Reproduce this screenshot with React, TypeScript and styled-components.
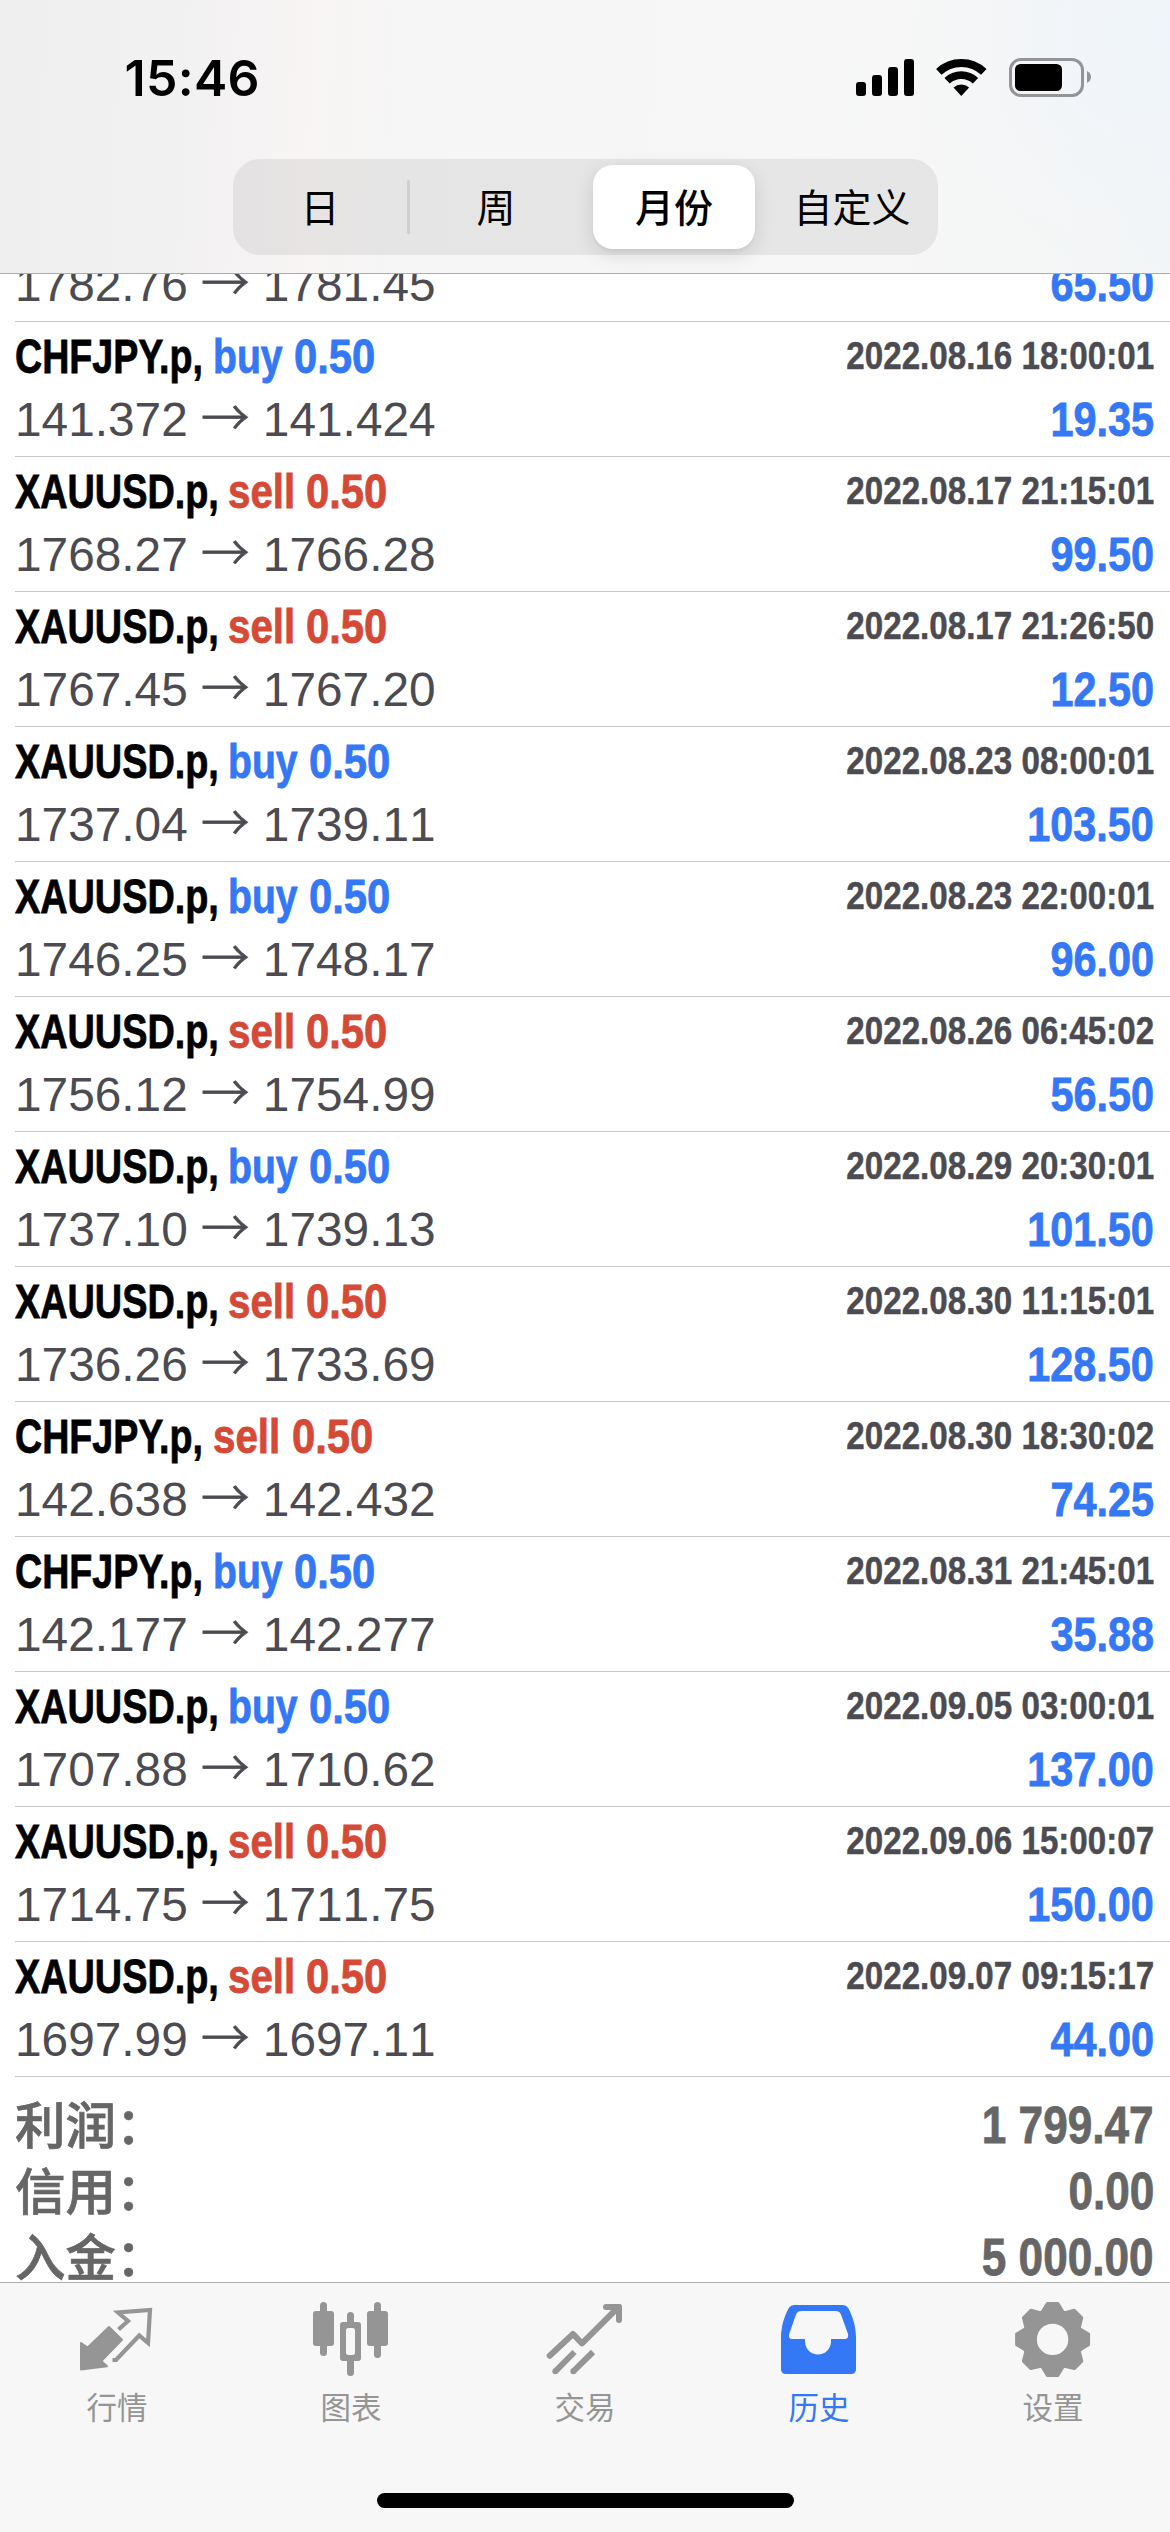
import React from 'react';
import styled, { createGlobalStyle } from 'styled-components';

const LATIN = '"Liberation Sans", Arial, sans-serif';
const HAN = '"Noto Sans CJK SC", "Liberation Sans", sans-serif';
const BLUE = '#3478f6';
const RED = '#d54a37';
const INK = '#4c4b51';
const TAB_GREY = '#959595';

const GlobalStyle = createGlobalStyle`
  * { box-sizing: border-box; }
  html, body { margin: 0; padding: 0; background: #fff; }
`;

const Screen = styled.div`
  display: flex;
  flex-direction: column;
  width: 1170px;
  height: 2532px;
  overflow: hidden;
  background: #fff;
  font-family: ${LATIN};
`;

/* ---------- header ---------- */

const Header = styled.header`
  flex: none;
  display: flex;
  flex-direction: column;
  align-items: center;
  height: 274px;
  border-bottom: 1px solid #adadae;
  background:
    radial-gradient(ellipse 260px 260px at 100% 12%, #f0f5fb 0%, rgba(241, 245, 250, 0) 100%),
    linear-gradient(92deg, #efefef 0%, #f1f1f1 14%, #f4f2f3 20%, #f8f5f4 27%, #f6f6f6 36%, #f7f7f7 70%, #f5f6f6 90%, #f3f5f7 100%);
`;

const StatusBar = styled.div`
  display: flex;
  align-items: flex-start;
  justify-content: space-between;
  width: 100%;
  height: 159px;
  padding: 48px 75px 0 124.5px;
`;

const Clock = styled.time`
  font: 600 50px/60px Inter, sans-serif;
  letter-spacing: 0.3px;
  color: #000;
`;

const StatusIcons = styled.svg`
  display: block;
  width: 245px;
  height: 46px;
  margin-top: 6px;
`;

const Segmented = styled.nav`
  display: flex;
  align-items: stretch;
  width: 705px;
  height: 96px;
  padding: 6px;
  border-radius: 27px;
  background: rgba(118, 118, 119, 0.13);
`;

const Segment = styled.button<{ $active?: boolean; $width: number; $before?: number; $after?: number }>`
  flex: none;
  width: ${p => p.$width}px;
  margin: 0 ${p => p.$after || 0}px 0 ${p => p.$before || 0}px;
  padding: 0 0 4px;
  border: 0;
  border-radius: 20px;
  background: ${p => (p.$active ? '#fff' : 'transparent')};
  box-shadow: ${p => (p.$active ? '0 6px 20px rgba(0,0,0,0.12), 0 3px 3px rgba(0,0,0,0.03)' : 'none')};
  color: #000;
  font: ${p => (p.$active ? 500 : 400)} 39px/56px ${HAN};
  white-space: nowrap;
`;

const SegmentDivider = styled.span`
  flex: none;
  width: 3px;
  height: 54px;
  margin: 15px 0;
  border-radius: 2px;
  background: #cfcfd0;
`;

/* ---------- deals ---------- */

const Deals = styled.main`
  flex: none;
  height: 2008px;
  padding-left: 15px;
  overflow: hidden;
`;

const Deal = styled.article<{ $clipped?: boolean }>`
  display: flex;
  flex-direction: column;
  gap: 9px;
  height: 135px;
  margin-top: ${p => (p.$clipped ? -87 : 0)}px;
  padding: 8px 16px 9px 0;
  border-bottom: 1px solid #c6c6c8;
`;

const Line = styled.div`
  display: flex;
  justify-content: space-between;
  height: 54px;
`;

const Caption = styled.div`
  display: flex;
`;

const Condensed = styled.span<{ $scale: number; $color: string; $width?: number; $right?: boolean }>`
  display: block;
  width: ${p => (p.$width ? `${p.$width}px` : 'auto')};
  font: 700 48px/54px ${LATIN};
  color: ${p => p.$color};
  -webkit-text-stroke: 0.8px ${p => p.$color};
  white-space: pre;
  transform: scaleX(${p => p.$scale});
  transform-origin: ${p => (p.$right ? 'right' : 'left')} center;
`;

const Stamp = styled(Condensed)`
  font-size: 39px;
  font-kerning: none;
  line-height: 52px;
  height: 52px;
  -webkit-text-stroke-width: 0.5px;
`;

const Prices = styled.span`
  font: 400 47.8px/54px ${LATIN};
  font-kerning: none;
  color: ${INK};
  white-space: pre;
`;

const Arrow = styled.span`
  font: 300 48.5px/0 ${HAN};
  -webkit-text-stroke: 0.8px ${INK};
`;

/* ---------- totals ---------- */

const Totals = styled.section`
  padding: 15px 16px 0 0;
`;

const TotalRow = styled.div`
  display: flex;
  justify-content: space-between;
  height: 66px;
`;

const TotalLabel = styled.span`
  font: 500 50.5px/60px ${HAN};
  color: #666;
  -webkit-text-stroke: 0.7px #666;
`;

const TotalValue = styled(Condensed)`
  font-size: 51px;
  line-height: 68px;
`;

/* ---------- tab bar ---------- */

const TabBar = styled.footer`
  flex: none;
  display: flex;
  flex-direction: column;
  justify-content: space-between;
  align-items: center;
  height: 250px;
  padding-bottom: 24px;
  border-top: 1px solid #adadae;
  background: #f7f7f7;
`;

const Tabs = styled.nav`
  display: grid;
  grid-template-columns: repeat(5, 1fr);
  width: 100%;
  padding-top: 15px;
`;

const Tab = styled.a<{ $active?: boolean }>`
  display: flex;
  flex-direction: column;
  align-items: center;
  gap: 9px;
  color: ${p => (p.$active ? BLUE : TAB_GREY)};
  font: 400 30.5px/39px ${HAN};
`;

const TabIcon = styled.svg`
  display: block;
  width: 110px;
  height: 80px;
`;

const HomeIndicator = styled.div`
  width: 417px;
  height: 15px;
  border-radius: 8px;
  background: #000;
`;

/* ---------- data ---------- */

type Side = 'buy' | 'sell';
type DealData = [symbol: string, side: Side, lots: string, time: string, open: string, close: string, profit: string];

const deals: DealData[] = [
  ['XAUUSD.p', 'sell', '0.50', '', '1782.76', '1781.45', '65.50'],
  ['CHFJPY.p', 'buy', '0.50', '2022.08.16 18:00:01', '141.372', '141.424', '19.35'],
  ['XAUUSD.p', 'sell', '0.50', '2022.08.17 21:15:01', '1768.27', '1766.28', '99.50'],
  ['XAUUSD.p', 'sell', '0.50', '2022.08.17 21:26:50', '1767.45', '1767.20', '12.50'],
  ['XAUUSD.p', 'buy', '0.50', '2022.08.23 08:00:01', '1737.04', '1739.11', '103.50'],
  ['XAUUSD.p', 'buy', '0.50', '2022.08.23 22:00:01', '1746.25', '1748.17', '96.00'],
  ['XAUUSD.p', 'sell', '0.50', '2022.08.26 06:45:02', '1756.12', '1754.99', '56.50'],
  ['XAUUSD.p', 'buy', '0.50', '2022.08.29 20:30:01', '1737.10', '1739.13', '101.50'],
  ['XAUUSD.p', 'sell', '0.50', '2022.08.30 11:15:01', '1736.26', '1733.69', '128.50'],
  ['CHFJPY.p', 'sell', '0.50', '2022.08.30 18:30:02', '142.638', '142.432', '74.25'],
  ['CHFJPY.p', 'buy', '0.50', '2022.08.31 21:45:01', '142.177', '142.277', '35.88'],
  ['XAUUSD.p', 'buy', '0.50', '2022.09.05 03:00:01', '1707.88', '1710.62', '137.00'],
  ['XAUUSD.p', 'sell', '0.50', '2022.09.06 15:00:07', '1714.75', '1711.75', '150.00'],
  ['XAUUSD.p', 'sell', '0.50', '2022.09.07 09:15:17', '1697.99', '1697.11', '44.00'],
];

const totals = [
  ['利润：', '1 799.47'],
  ['信用：', '0.00'],
  ['入金：', '5 000.00'],
];

/* advance widths and squeeze factors of the condensed captions */
const symbolFit: Record<string, { width: number; scale: number }> = {
  'CHFJPY.p': { width: 198, scale: 0.783 },
  'XAUUSD.p': { width: 212.5, scale: 0.788 },
};
const sideFit: Record<Side, { width: number; scale: number; color: string }> = {
  buy: { width: 81, scale: 0.815, color: BLUE },
  sell: { width: 78.5, scale: 0.84, color: RED },
};

function DealRow({ deal }: { deal: DealData }) {
  const [symbol, side, lots, time, open, close, profit] = deal;
  const s = symbolFit[symbol];
  const d = sideFit[side];
  return (
    <Deal $clipped={!time}>
      <Line>
        {time && (
          <>
            <Caption>
              <Condensed $scale={s.scale} $width={s.width} $color="#000">{symbol},</Condensed>
              <Condensed $scale={d.scale} $width={d.width} $color={d.color}>{side}</Condensed>
              <Condensed $scale={0.87} $color={d.color}>{lots}</Condensed>
            </Caption>
            <Stamp $scale={0.85} $color={INK} $right>{time}</Stamp>
          </>
        )}
      </Line>
      <Line>
        <Prices>{open} <Arrow>→</Arrow> {close}</Prices>
        <Condensed $scale={0.862} $color={BLUE} $right>{profit}</Condensed>
      </Line>
    </Deal>
  );
}

/* ---------- icons ---------- */

const QuotesIcon = () => (
  <TabIcon viewBox="0 0 110 80">
    <path d="M19 45 L25.7 49.5 L47 29 L60 41.7 L39.3 63 L45 68.3 L19 71.5Z" fill="currentColor" stroke="currentColor" strokeWidth="2" strokeLinejoin="round" />
    <path d="M50.5 62 H54 L77.3 37.5 L86 45 L88 12 L56 14.5 L66 23 L56.5 31.5" fill="none" stroke="currentColor" strokeWidth="4.2" />
  </TabIcon>
);

const ChartIcon = () => (
  <TabIcon viewBox="0 0 110 80" fill="currentColor">
    <rect x="24" y="4" width="7" height="54" rx="3.5" />
    <rect x="17" y="13" width="21" height="35" rx="3" />
    <rect x="78" y="4" width="7" height="56" rx="3.5" />
    <rect x="71" y="13" width="21" height="35" rx="3" />
    <path d="M51 24 V17.5 a3.5 3.5 0 0 1 7 0 V24 H62 a3 3 0 0 1 3 3 V60 a3 3 0 0 1 -3 3 H58 V74.5 a3.5 3.5 0 0 1 -7 0 V63 H47 a3 3 0 0 1 -3 -3 V27 a3 3 0 0 1 3 -3Z M52.5 30 a2.5 2.5 0 0 0 -2.5 2.5 V54.5 a2.5 2.5 0 0 0 2.5 2.5 H56.5 a2.5 2.5 0 0 0 2.5 -2.5 V32.5 a2.5 2.5 0 0 0 -2.5 -2.5Z" fillRule="evenodd" />
  </TabIcon>
);

const TradeIcon = () => (
  <TabIcon viewBox="0 0 110 80" fill="none" stroke="currentColor" strokeWidth="6" strokeLinecap="round" strokeLinejoin="round">
    <path d="M19.7 57.7 L43 36 L52 45.3 L87 10.5" />
    <path d="M76 9 H89 V22" />
    <path d="M86 9 H89 V12Z" />
    <g strokeLinecap="butt">
      <path d="M25.3 73.3 L44.5 54" />
      <path d="M43.3 73.3 L63 54" />
    </g>
    <path d="M25.3 73.3 h0.01 M43.3 73.3 h0.01" />
  </TabIcon>
);

const HistoryIcon = () => (
  <TabIcon viewBox="0 0 110 80" fill="currentColor" fillRule="evenodd">
    <path d="M31 7 H78 C81 7 83 8 84.5 10.5 C89 19 92 29 92 40 V71.5 a4.5 4.5 0 0 1 -4.5 4.5 H21.5 a4.5 4.5 0 0 1 -4.5 -4.5 V40 C17 29 20 19 24.5 10.5 C26 8 28 7 31 7Z M38 13 C34.5 13 33 14 32 16.5 L25.2 36 C24.5 39 25.5 41 28.5 41 H41 V43.5 a13 13 0 0 0 26 0 V41 H80.5 C83.5 41 84.5 39 84 36 L77 16.5 C76 14 74.5 13 71 13Z" />
  </TabIcon>
);

const gearPath = () => {
  const pts: string[] = [];
  for (let k = 0; k < 8; k++) {
    const a = (k * Math.PI) / 4;
    const tooth = [[-9.3, -29.3], [-5.3, -36], [5.3, -36], [9.3, -29.3], [11.1, -26.8]];
    tooth.forEach(([x, y]) => {
      const px = 54.6 + x * Math.cos(a) - y * Math.sin(a);
      const py = 41.4 + x * Math.sin(a) + y * Math.cos(a);
      pts.push(`${px.toFixed(2)} ${py.toFixed(2)}`);
    });
  }
  return `M${pts.join(' L')}Z`;
};

const SettingsIcon = () => (
  <TabIcon viewBox="0 0 110 80">
    <path d={gearPath()} fill="currentColor" stroke="currentColor" strokeWidth="3" strokeLinejoin="round" />
    <circle cx="54.6" cy="41.4" r="15.7" fill="#f7f7f7" />
  </TabIcon>
);

const tabs = [
  { label: '行情', Icon: QuotesIcon },
  { label: '图表', Icon: ChartIcon },
  { label: '交易', Icon: TradeIcon },
  { label: '历史', Icon: HistoryIcon, active: true },
  { label: '设置', Icon: SettingsIcon },
];

export default function App() {
  return (
    <Screen>
      <GlobalStyle />
      <Header>
        <StatusBar>
          <Clock>15:46</Clock>
          <StatusIcons viewBox="0 0 245 46">
            <rect x="6" y="28" width="10" height="14" rx="3" />
            <rect x="22" y="21" width="10" height="21" rx="3" />
            <rect x="38" y="13" width="10" height="29" rx="3" />
            <rect x="54" y="5" width="10" height="37" rx="3" />
            <g fill="none" stroke="#000">
              <path d="M88.8 17.9 A33 33 0 0 1 133.8 17.9" strokeWidth="8" />
              <path d="M97.1 26.8 A20.8 20.8 0 0 1 125.5 26.8" strokeWidth="7.7" />
            </g>
            <path d="M111.3 42 L103.5 33.5 A11.5 11.5 0 0 1 119.1 33.5Z" />
            <rect x="160.5" y="5.5" width="72" height="36" rx="10.5" fill="none" stroke="#949496" strokeWidth="3" />
            <rect x="165" y="10" width="47" height="27" rx="5.5" />
            <path d="M237 17 C240 18.5 241 21 241 23 C241 25 240 27.5 237 29Z" fill="#949496" />
          </StatusIcons>
        </StatusBar>
        <Segmented>
          <Segment $width={163} $after={5.5}>日</Segment>
          <SegmentDivider />
          <Segment $width={172} $after={11}>周</Segment>
          <Segment $width={162} $active>月份</Segment>
          <Segment $width={159} $before={17.5}>自定义</Segment>
        </Segmented>
      </Header>
      <Deals>
        {deals.map((deal, i) => (
          <DealRow key={i} deal={deal} />
        ))}
        <Totals>
          {totals.map(([label, value]) => (
            <TotalRow key={label}>
              <TotalLabel>{label}</TotalLabel>
              <TotalValue $scale={0.865} $color="#666" $right>{value}</TotalValue>
            </TotalRow>
          ))}
        </Totals>
      </Deals>
      <TabBar>
        <Tabs>
          {tabs.map(({ label, Icon, active }) => (
            <Tab key={label} $active={active}>
              <Icon />
              {label}
            </Tab>
          ))}
        </Tabs>
        <HomeIndicator />
      </TabBar>
    </Screen>
  );
}
